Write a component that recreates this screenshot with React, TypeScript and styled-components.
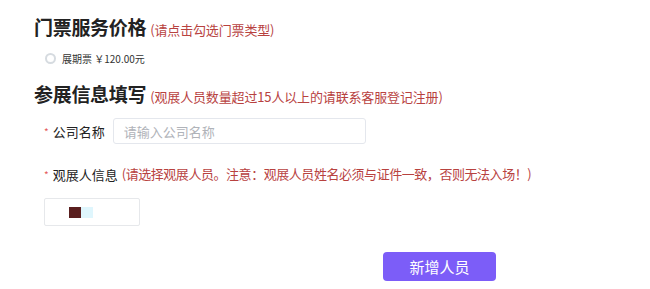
import React from "react";
import styled, { createGlobalStyle } from "styled-components";

const Global = createGlobalStyle`
  html, body { margin: 0; padding: 0; background: #fff; }
  body { font-family: "Noto Sans CJK SC", "Noto Sans", sans-serif; color: #333; }
`;

const Page = styled.div`
  width: 650px;
  height: 289px;
  box-sizing: border-box;
  padding: 14px 0 0 34px;
  display: flex;
  flex-direction: column;
`;

const SectionTitle = styled.div<{ $mt?: number }>`
  display: flex;
  align-items: baseline;
  gap: 4px;
  margin-top: ${(p) => p.$mt ?? 0}px;
  height: 26px;
`;

const TitleText = styled.span`
  font-size: 19px;
  font-weight: 700;
  color: #222;
  line-height: 26px;
  letter-spacing: -0.3px;
`;

const Hint = styled.span<{ $ml?: number; $tight?: boolean }>`
  font-size: 13px;
  color: #b8423f;
  line-height: 20px;
  margin-left: ${(p) => p.$ml ?? 0}px;
  letter-spacing: ${(p) => (p.$tight ? "-0.45px" : "-0.15px")};
`;

const RadioRow = styled.label`
  display: flex;
  align-items: center;
  gap: 6px;
  margin: 6px 0 0 11px;
  height: 24px;
  font-size: 10px;
  color: #333;
`;

const Radio = styled.span`
  width: 7px;
  height: 7px;
  border-radius: 50%;
  border: 2px solid #d6dbe0;
  background: #fff;
`;

const FieldRow = styled.div<{ $mt?: number }>`
  display: flex;
  align-items: center;
  margin: ${(p) => p.$mt ?? 0}px 0 0 10px;
`;

const Star = styled.span`
  color: #e45a5a;
  font-size: 10px;
  margin-right: 4px;
`;

const Label = styled.span`
  font-size: 13px;
  color: #222;
`;

const Input = styled.input`
  margin-left: 8px;
  width: 253px;
  height: 26px;
  box-sizing: border-box;
  border: 1px solid #e4e7ed;
  border-radius: 3px;
  padding: 0 10px;
  font-size: 13px;
  font-family: inherit;
  color: #333;
  outline: none;
  &::placeholder { color: #b0b3b9; }
`;

const PersonBox = styled.div`
  margin: 14px 0 0 10px;
  width: 96px;
  height: 28px;
  box-sizing: border-box;
  border: 1px solid #e6e8eb;
  border-radius: 2px;
  display: flex;
  align-items: center;
  padding-left: 24px;
`;

const Swatch = styled.span<{ $c: string }>`
  width: 12px;
  height: 11px;
  background: ${(p) => p.$c};
`;

const ButtonRow = styled.div`
  display: flex;
  margin-top: 26px;
  padding-left: 349px;
`;

const AddButton = styled.button`
  width: 113px;
  height: 29px;
  border: none;
  border-radius: 4px;
  background: #7c5df8;
  color: #fff;
  font-size: 15px;
  font-family: inherit;
  cursor: pointer;
`;

export default function App() {
  return (
    <>
      <Global />
      <Page>
        <SectionTitle>
          <TitleText>门票服务价格</TitleText>
          <Hint>(请点击勾选门票类型)</Hint>
        </SectionTitle>
        <RadioRow>
          <Radio />
          <span>展期票 ￥120.00元</span>
        </RadioRow>
        <SectionTitle $mt={11}>
          <TitleText>参展信息填写</TitleText>
          <Hint>(观展人员数量超过15人以上的请联系客服登记注册)</Hint>
        </SectionTitle>
        <FieldRow $mt={11}>
          <Star>*</Star>
          <Label>公司名称</Label>
          <Input placeholder="请输入公司名称" />
        </FieldRow>
        <FieldRow $mt={20}>
          <Star>*</Star>
          <Label>观展人信息</Label>
          <Hint $ml={4} $tight>(请选择观展人员。注意：观展人员姓名必须与证件一致，否则无法入场！)</Hint>
        </FieldRow>
        <PersonBox>
          <Swatch $c="#5a1f1f" />
          <Swatch $c="#dff6fd" />
        </PersonBox>
        <ButtonRow>
          <AddButton>新增人员</AddButton>
        </ButtonRow>
      </Page>
    </>
  );
}
